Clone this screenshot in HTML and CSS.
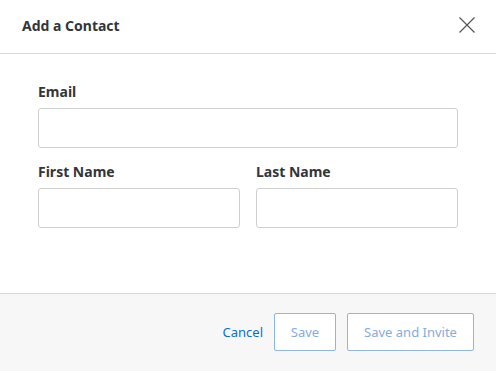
FILE: index.html
```html
<html><head>
<meta charset="UTF-8">
<title>Add a Contact</title>
<link rel="stylesheet" href="styles.css">
</head>
<body>
  <div class="dialog">
    <header class="dialog-header">
      <h1>Add a Contact</h1>
      <button class="close-btn" aria-label="Close">
        <svg width="16" height="16" viewBox="0 0 16 16">
          <path d="M0.5 0.5 L15.5 15.5 M15.5 0.5 L0.5 15.5" stroke="#555" stroke-width="1.2" fill="none"/>
        </svg>
      </button>
    </header>

    <main class="dialog-body">
      <div class="field">
        <label for="email">Email</label>
        <input type="text" id="email">
      </div>
      <div class="row">
        <div class="field">
          <label for="firstName">First Name</label>
          <input type="text" id="firstName">
        </div>
        <div class="field">
          <label for="lastName">Last Name</label>
          <input type="text" id="lastName">
        </div>
      </div>
    </main>

    <footer class="dialog-footer">
      <button class="link-btn">Cancel</button>
      <button class="btn" disabled>Save</button>
      <button class="btn btn-wide" disabled>Save and Invite</button>
    </footer>
  </div>
</body></html>
```

FILE: styles.css
```css
body {
  margin: 0;
  font-family: 'Noto Sans', 'Open Sans', sans-serif;
  color: #32363a;
  background-color: #fff;
}
.dialog {
  display: flex;
  flex-direction: column;
  height: 100vh;
}
.dialog-header {
  display: flex;
  align-items: center;
  justify-content: space-between;
  padding: 0 20px 0 22px;
  border-bottom: 1px solid #d9d9d9;
  box-sizing: border-box;
  height: 54px;
}
.dialog-header h1 {
  margin: 0;
  font-size: 14px;
  font-weight: 700;
  padding-bottom: 2px;
}
.close-btn {
  border: none;
  background: none;
  padding: 0;
  width: 18px;
  height: 18px;
  display: flex;
  align-items: center;
  justify-content: center;
  cursor: pointer;
  margin-bottom: 3px;
}
.dialog-body {
  flex-grow: 1;
  padding: 28px 38px 0 38px;
}
.field {
  display: flex;
  flex-direction: column;
  margin-bottom: 14px;
  min-width: 0;
}
.field label {
  font-size: 14px;
  font-weight: 700;
  line-height: 20px;
  margin-bottom: 6px;
}
.field input {
  height: 40px;
  width: 100%;
  min-width: 0;
  border: 1px solid #cfcfcf;
  border-radius: 3px;
  box-sizing: border-box;
  font-family: inherit;
  font-size: 14px;
  padding: 0 10px;
  outline: none;
}
.row {
  display: flex;
  gap: 16px;
}
.row .field {
  flex: 1;
}
.dialog-footer {
  height: 78px;
  box-sizing: border-box;
  border-top: 1px solid #d9d9d9;
  background-color: #f7f7f7;
  display: flex;
  align-items: center;
  justify-content: flex-end;
  gap: 11px;
  padding: 0 22px 2px 0;
}
.link-btn {
  border: none;
  background: none;
  padding: 0;
  color: #0a6ed1;
  font-family: inherit;
  font-size: 13px;
  cursor: pointer;
}
.btn {
  height: 38px;
  width: 62px;
  border: 1px solid #8fb5e3;
  border-radius: 2px;
  background-color: #fff;
  color: #84acdd;
  font-family: inherit;
  font-size: 13px;
  padding: 0;
}
.btn-wide {
  width: 127px;
}
```
